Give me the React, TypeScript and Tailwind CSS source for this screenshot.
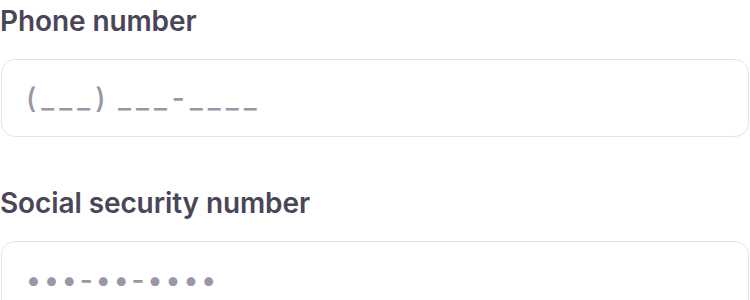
import React from 'react';

const FIELDS = [
  { label: 'Phone number', placeholder: '(___)\u200A___-____', tracking: 'tracking-[5px]' },
  { label: 'Social security number', placeholder: '•••-••-••••', tracking: 'tracking-[3px]' },
];

export default function App() {
  return (
    <div className="w-[750px] h-[300px] overflow-hidden bg-white" style={{ fontFamily: 'Inter, "Noto Sans", sans-serif' }}>
      <div className="flex flex-col gap-[45px]">
        {FIELDS.map(({ label, placeholder, tracking }) => (
          <div key={label} className="flex flex-col gap-[17px]">
            <label className="text-[28px] leading-[42px] font-semibold text-[#4a4658] tracking-[-0.1px]">{label}</label>
            <input
              type="text"
              placeholder={placeholder}
              className={`h-[78px] mx-px rounded-[14px] border border-[#e4e3ea] pl-[24px] pr-6 text-[28px] font-medium text-[#4a4658] placeholder:text-[#9a96a8] outline-none ${tracking}`}
            />
          </div>
        ))}
      </div>
    </div>
  );
}
